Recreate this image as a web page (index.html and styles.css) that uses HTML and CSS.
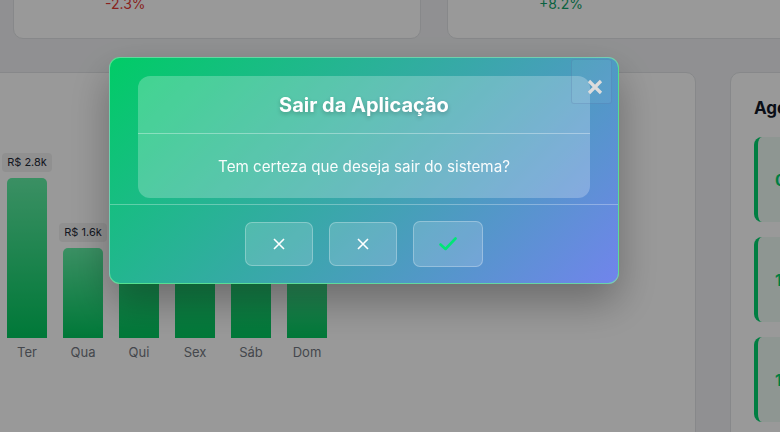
FILE: index.html
```html
<!DOCTYPE html>
<html lang="pt-BR">
<head>
<meta charset="utf-8">
<title>Dashboard</title>
<link rel="stylesheet" href="styles.css">
</head>
<body>
<div class="page">
  <div class="stat-row">
    <div class="stat-card">
      <div class="stat-icon"></div>
      <div class="stat-text">
        <div class="stat-label">Ontem</div>
        <div class="stat-value">R$ 1.240</div>
        <div class="stat-change neg">-2.3%</div>
      </div>
    </div>
    <div class="stat-card">
      <div class="stat-icon"></div>
      <div class="stat-text">
        <div class="stat-label">Semana</div>
        <div class="stat-value">R$ 9.870</div>
        <div class="stat-change pos">+8.2%</div>
      </div>
    </div>
    <div class="stat-card"></div>
  </div>

  <div class="main-row">
    <div class="chart-card">
      <div class="bars">
        <div class="bar-col"><span class="bar-value">R$ 2.1k</span><div class="bar" style="height:130px"></div></div>
        <div class="bar-col"><span class="bar-value">R$ 2.8k</span><div class="bar" style="height:160px"></div></div>
        <div class="bar-col"><span class="bar-value">R$ 1.6k</span><div class="bar" style="height:90px"></div></div>
        <div class="bar-col"><span class="bar-value">R$ 2.3k</span><div class="bar" style="height:135px"></div></div>
        <div class="bar-col"><span class="bar-value">R$ 2.5k</span><div class="bar" style="height:145px"></div></div>
        <div class="bar-col"><span class="bar-value">R$ 2.2k</span><div class="bar" style="height:128px"></div></div>
        <div class="bar-col"><span class="bar-value">R$ 1.3k</span><div class="bar" style="height:76px"></div></div>
      </div>
      <div class="days">
        <span>Seg</span><span>Ter</span><span>Qua</span><span>Qui</span><span>Sex</span><span>Sáb</span><span>Dom</span>
      </div>
    </div>

    <div class="side-card">
      <h2 class="side-title">Agenda de Hoje</h2>
      <div class="appt"><span class="appt-time">09:00</span></div>
      <div class="appt"><span class="appt-time">14:30</span></div>
      <div class="appt"><span class="appt-time">16:00</span></div>
    </div>
  </div>
</div>

<div class="overlay">
  <div class="modal">
    <button class="close-btn" aria-label="Fechar">
      <svg width="16" height="16" viewBox="0 0 16 16"><path d="M2 2 L14 14 M14 2 L2 14" stroke="#dcdcdc" stroke-width="3.2" stroke-linecap="butt" fill="none"/></svg>
    </button>
    <div class="modal-card">
      <div class="modal-head"><h1 class="modal-title">Sair da Aplicação</h1></div>
      <div class="modal-body"><p class="modal-text">Tem certeza que deseja sair do sistema?</p></div>
    </div>
    <div class="modal-foot">
      <button class="act-btn">
        <svg width="12" height="12" viewBox="0 0 12 12"><path d="M1 1 L11 11 M11 1 L1 11" stroke="#ffffff" stroke-width="1.6" fill="none"/></svg>
      </button>
      <button class="act-btn">
        <svg width="12" height="12" viewBox="0 0 12 12"><path d="M1 1 L11 11 M11 1 L1 11" stroke="#ffffff" stroke-width="1.6" fill="none"/></svg>
      </button>
      <button class="act-btn confirm">
        <svg width="18" height="14" viewBox="0 0 18 14"><path d="M1.5 7.5 L6.5 12 L16.5 1.5" stroke="#00e676" stroke-width="2.6" stroke-linecap="round" stroke-linejoin="round" fill="none"/></svg>
      </button>
    </div>
  </div>
</div>
</body>
</html>
```

FILE: styles.css
```css
* { box-sizing: border-box; }

html, body {
  margin: 0;
  padding: 0;
  background: #f0f1f3;
  font-family: Inter, "Noto Sans", "Liberation Sans", sans-serif;
  overflow: hidden;
  width: 780px;
  height: 432px;
}

.page {
  margin-top: -72px;
  padding-left: 13px;
}

.stat-row {
  display: grid;
  grid-template-columns: 408px 408px 408px;
  gap: 26px;
}

.stat-card {
  height: 111px;
  background: #ffffff;
  border: 1px solid #e1e3e6;
  border-radius: 10px;
  display: flex;
  align-items: flex-end;
  gap: 15px;
  padding: 0 24px 25px;
}

.stat-icon {
  width: 52px;
  height: 52px;
  align-self: center;
}

.stat-text {
  display: flex;
  flex-direction: column;
}

.stat-label { font-size: 12px; color: #6b7280; line-height: 16px; }
.stat-value { font-size: 18px; font-weight: 700; color: #111827; line-height: 24px; }

.stat-change {
  font-size: 14px;
  line-height: 18px;
}
.stat-change.neg { color: #e53935; }
.stat-change.pos { color: #0fa46b; }

.main-row {
  display: flex;
  gap: 34px;
  margin-top: 33px;
  margin-left: -87px;
}

.chart-card {
  flex: 0 0 770px;
  height: 420px;
  background: #ffffff;
  border: 1px solid #e1e3e6;
  border-radius: 10px;
  padding: 23px 24px;
}

.bars {
  height: 242px;
  display: flex;
  align-items: flex-end;
  gap: 16px;
}

.bar-col {
  width: 40px;
  display: flex;
  flex-direction: column;
  align-items: center;
}

.bar-value {
  font-size: 11px;
  line-height: 15px;
  color: #1f2937;
  background: rgba(0, 0, 0, 0.06);
  border-radius: 4px;
  padding: 2px 5px;
  white-space: nowrap;
  margin-bottom: 6px;
}

.bar {
  width: 40px;
  border-radius: 5px 5px 0 0;
  background: linear-gradient(to bottom, #62f0a6, #00c85e);
}

.days {
  display: flex;
  gap: 16px;
  margin-top: 6px;
}

.days span {
  width: 40px;
  text-align: center;
  font-size: 13px;
  line-height: 16px;
  color: #727780;
}

.side-card {
  flex: 0 0 300px;
  height: 420px;
  background: #ffffff;
  border: 1px solid #e1e3e6;
  border-radius: 10px;
  padding: 23px 23px;
}

.side-title {
  margin: 0 0 17px;
  font-size: 17px;
  line-height: 24px;
  font-weight: 700;
  color: #111827;
  white-space: nowrap;
}

.appt {
  height: 85px;
  margin-bottom: 15px;
  background: #edfbf3;
  border-left: 4px solid #00d26e;
  border-radius: 8px;
  display: flex;
  align-items: center;
  padding-left: 17px;
}

.appt-time {
  font-size: 16px;
  font-weight: 700;
  color: #00d26e;
}

/* overlay + modal */
.overlay {
  position: fixed;
  inset: 0;
  background: rgba(0, 0, 0, 0.4);
  padding: 57px 0 0 109px;
}

.modal {
  position: relative;
  width: 510px;
  height: 227px;
  border-radius: 11px;
  border: 1px solid rgba(120, 235, 160, 0.7);
  background: linear-gradient(135deg, #00cc66 0%, #7184ec 100%);
  box-shadow: 0 18px 40px rgba(0, 0, 0, 0.3);
  display: flex;
  flex-direction: column;
}

.close-btn {
  position: absolute;
  top: 1px;
  right: 6px;
  width: 41px;
  height: 45px;
  border: 1.5px solid rgba(60, 90, 150, 0.2);
  background: rgba(255, 255, 255, 0.06);
  border-radius: 3px;
  padding: 10px 0 0 6px;
  display: flex;
  align-items: center;
  justify-content: center;
  cursor: pointer;
}

.modal-card {
  margin: 18px 28px 0;
  background: rgba(255, 255, 255, 0.24);
  border-radius: 12px;
}

.modal-head {
  height: 58px;
  border-bottom: 1px solid rgba(255, 255, 255, 0.35);
  display: flex;
  align-items: center;
  justify-content: center;
}

.modal-title {
  margin: 0;
  font-size: 20px;
  font-weight: 700;
  color: #ffffff;
  text-shadow: 0 2px 4px rgba(0, 0, 0, 0.22);
}

.modal-body {
  height: 64px;
  display: flex;
  align-items: center;
  justify-content: center;
}

.modal-text {
  margin: 0;
  font-size: 15.2px;
  color: rgba(255, 255, 255, 0.95);
}

.modal-foot {
  margin-top: 6px;
  border-top: 1px solid rgba(255, 255, 255, 0.3);
  flex: 1;
  display: flex;
  align-items: center;
  justify-content: center;
  gap: 16px;
}

.act-btn {
  width: 68px;
  height: 44px;
  border-radius: 7px;
  border: 1px solid rgba(255, 255, 255, 0.28);
  background: rgba(255, 255, 255, 0.16);
  display: flex;
  align-items: center;
  justify-content: center;
  padding: 0;
  cursor: pointer;
}

.act-btn.confirm {
  width: 70px;
  height: 46px;
}
```
